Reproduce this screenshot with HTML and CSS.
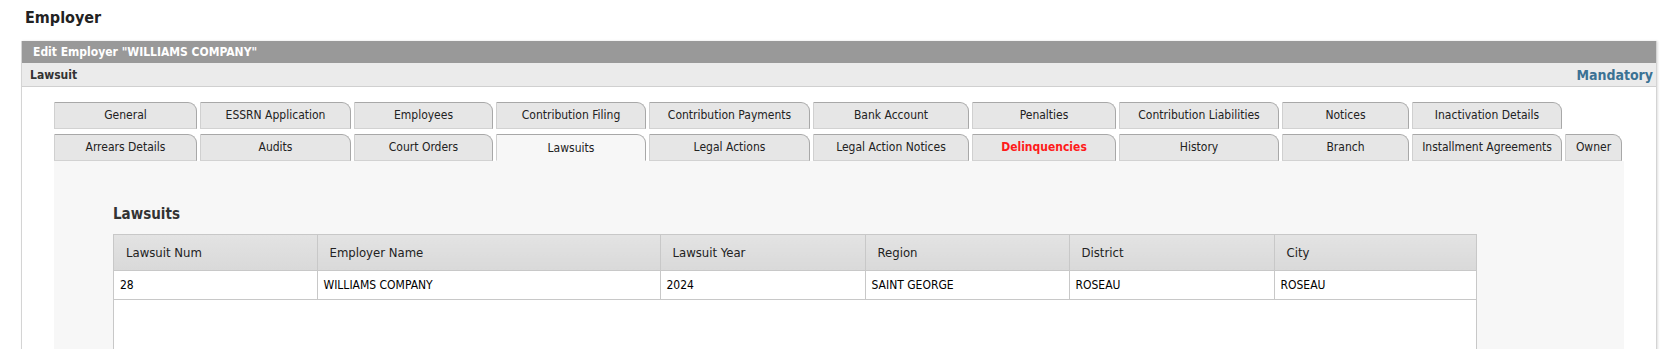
FILE: index.html
```html
<!DOCTYPE html>
<html lang="en">
<head>
    <meta charset="UTF-8">
    <meta name="viewport" content="width=device-width, initial-scale=1.0">
    <title>Employer - Lawsuits</title>
    <link rel="stylesheet" href="styles.css">
</head>
<body>
    <div class="page-title">Employer</div>

    <div class="box">
        <div class="box-head">Edit Employer "WILLIAMS COMPANY"</div>
        <div class="box-sub">
            <span>Lawsuit</span>
            <span class="mandatory">Mandatory</span>
        </div>

        <div class="box-body">
            <div class="tabs">
                <a class="tab">General</a>
                <a class="tab">ESSRN Application</a>
                <a class="tab">Employees</a>
                <a class="tab">Contribution Filing</a>
                <a class="tab">Contribution Payments</a>
                <a class="tab">Bank Account</a>
                <a class="tab">Penalties</a>
                <a class="tab">Contribution Liabilities</a>
                <a class="tab">Notices</a>
                <a class="tab">Inactivation Details</a>
                <span class="tab-spacer"></span>

                <a class="tab">Arrears Details</a>
                <a class="tab">Audits</a>
                <a class="tab">Court Orders</a>
                <a class="tab active">Lawsuits</a>
                <a class="tab">Legal Actions</a>
                <a class="tab">Legal Action Notices</a>
                <a class="tab alert">Delinquencies</a>
                <a class="tab">History</a>
                <a class="tab">Branch</a>
                <a class="tab">Installment Agreements</a>
                <a class="tab last">Owner</a>
            </div>

            <div class="panel">
                <h2>Lawsuits</h2>
                <div class="grid-wrap">
                    <table class="grid">
                        <colgroup>
                            <col style="width:203px">
                            <col style="width:343px">
                            <col style="width:205px">
                            <col style="width:204px">
                            <col style="width:205px">
                            <col>
                        </colgroup>
                        <thead>
                            <tr>
                                <th>Lawsuit Num</th>
                                <th>Employer Name</th>
                                <th>Lawsuit Year</th>
                                <th>Region</th>
                                <th>District</th>
                                <th>City</th>
                            </tr>
                        </thead>
                        <tbody>
                            <tr>
                                <td>28</td>
                                <td>WILLIAMS COMPANY</td>
                                <td>2024</td>
                                <td>SAINT GEORGE</td>
                                <td>ROSEAU</td>
                                <td>ROSEAU</td>
                            </tr>
                        </tbody>
                    </table>
                </div>
            </div>
        </div>
    </div>
</body>
</html>
```

FILE: styles.css
```css
body {
    font-family: "DejaVu Sans Condensed", "DejaVu Sans", sans-serif;
    font-stretch: condensed;
    margin: 0;
    padding: 0 18px 0 21px;
    background-color: #ffffff;
    color: #222222;
    font-size: 12px;
}

.page-title {
    font-size: 16px;
    font-weight: bold;
    line-height: 20px;
    padding: 8px 0 0 4px;
    margin-bottom: 13px;
    color: #222222;
}

.box {
    border: 1px solid #d4d4d4;
    border-top: none;
    box-shadow: 1px 0 2px rgba(0, 0, 0, 0.12);
}

.box-head {
    background-color: #999999;
    color: #ffffff;
    font-weight: bold;
    height: 22px;
    line-height: 22px;
    padding-left: 11px;
}

.box-sub {
    display: flex;
    justify-content: space-between;
    align-items: center;
    background-color: #ebebeb;
    border-bottom: 1px solid #d0d0d0;
    height: 23px;
    padding: 0 3px 0 8px;
    font-weight: bold;
    color: #333333;
}

.mandatory {
    color: #3b7294;
    font-size: 14px;
}

.box-body {
    padding: 15px 32px 0 32px;
}

.tabs {
    display: grid;
    grid-template-columns: 146px 154px 142px 153px 164px 159px 147px 163px 130px 153px 57px;
    row-gap: 5px;
}

.tab {
    display: block;
    box-sizing: border-box;
    height: 27px;
    line-height: 25px;
    margin-right: 3px;
    text-align: center;
    white-space: nowrap;
    overflow: hidden;
    background-color: #e6e6e6;
    border: 1px solid #a8a8a8;
    border-left-color: #d0d0d0;
    border-bottom-color: #d2d2d2;
    border-top-right-radius: 9px;
    color: #222222;
    cursor: pointer;
}

.tab.last {
    margin-right: 0;
}

.tab.active {
    background-color: #f7f7f7;
    border-bottom-color: #f7f7f7;
    padding-top: 1px;
}

.tab.alert {
    color: #ff1a1a;
    font-weight: bold;
}

.panel {
    background-color: #f7f7f7;
    padding: 44px 0 0 59px;
}

.panel h2 {
    font-size: 15px;
    line-height: 18px;
    margin: 0 0 11px 0;
    color: #333333;
}

.grid-wrap {
    width: 1362px;
    height: 160px;
    background-color: #ffffff;
    border: 1px solid #c8c8c8;
}

.grid {
    width: 100%;
    border-collapse: collapse;
    table-layout: fixed;
}

.grid th {
    height: 35px;
    text-align: left;
    font-weight: normal;
    font-size: 13px;
    color: #222222;
    padding: 0 0 0 12px;
    background: linear-gradient(#e3e3e3, #d9d9d9);
    border-right: 1px solid #c8c8c8;
    border-bottom: 1px solid #c8c8c8;
}

.grid td {
    height: 28px;
    padding: 0 0 0 6px;
    color: #000000;
    border-right: 1px solid #c8c8c8;
    border-bottom: 1px solid #c8c8c8;
}

.grid th:last-child,
.grid td:last-child {
    border-right: none;
}
```
